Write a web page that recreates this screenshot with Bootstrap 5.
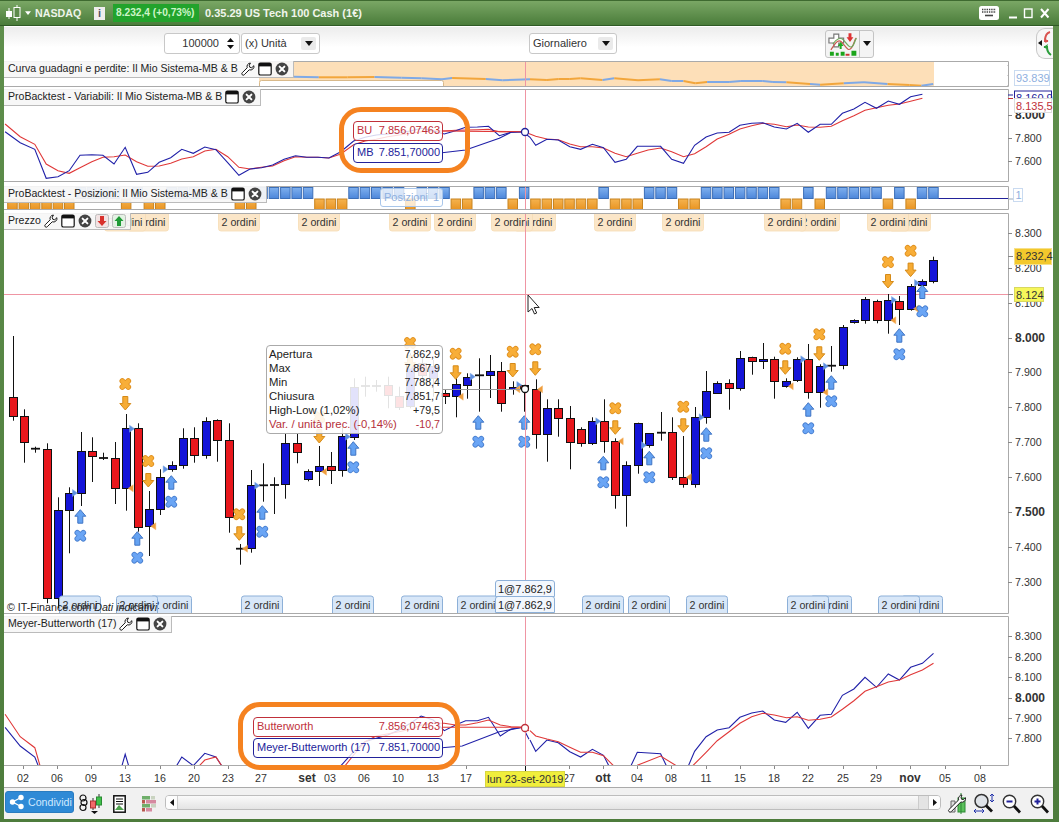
<!DOCTYPE html>
<html lang="it">
<head>
<meta charset="utf-8">
<title>NASDAQ</title>
<link href="https://cdn.jsdelivr.net/npm/bootstrap@5.3.0/dist/css/bootstrap.min.css" rel="stylesheet">
<style>
html,body{margin:0;padding:0;background:#fff;overflow:hidden}
body,svg text{font-family:"Liberation Sans",Arial,sans-serif;font-size:10.67px;color:#222}
svg text.t11{font-size:11px}
svg text.tb{font-size:12px;font-weight:700}
.win{position:relative;width:1059px;height:822px;padding:0 6px 3px 4px;background:linear-gradient(#5f8f4c,#4d7c3c);overflow:hidden;border-top:1px solid #3e6a30}
.ttl{height:25px;flex:none;margin:0 -6px 0 -4px;padding-left:5px;color:#fff;font-weight:700;font-size:10.67px;background:linear-gradient(#7aa765,#4a7c3a);border-bottom:1px solid #2f5a25}
.cols{background:#fff;flex:1 1 auto;padding-top:1px}
.ttl svg{flex:none}
.arr{margin-left:4px}
.nm{margin-left:4px;color:#eef4ea;width:46px}
.inf{width:11px;height:13px;margin-left:13px;background:#eee;color:#556;text-align:center;line-height:13px;font-size:11px}
.quo{margin-left:8px;width:86px;height:18px;line-height:18px;padding-left:3px;background:#22a32c;color:#cdf5c8;white-space:nowrap;overflow:hidden;font-size:10.2px}
.clk{margin-left:6px;color:#f0f5ec;font-size:11px}
.wbtns{margin-left:auto;padding-right:7px}
.tools{height:34px;flex:none;background:linear-gradient(#ececec,#fff 60%);padding-bottom:1px}
.fld{height:21px;background:#fff;border:1px solid #c8c8c8;border-radius:3px;font-size:11px;color:#333}
.fnum{width:76px;margin-left:160px;padding-right:5px}
.fsel{width:79px;margin-left:1px;padding:0 3px}
.fsel2{width:88px;margin-left:209px;padding:0 3px}
.dbox{width:15px;height:13px;background:#eaeaea;border-radius:2px}
.sbtn{width:49px;height:28px;margin-left:208px;background:#f4f4f4;border:1px solid #c4c4c4;border-radius:3px}
.sdrop{width:14px;height:100%;border-left:1px solid #c4c4c4}
.ovl{width:17px;height:31px;margin-left:auto;background:#f7f7f7;border:1px solid #c8c8c8;border-right:0;border-radius:9px 0 0 9px}
.pane{position:relative;background:#fff;flex:none}
.pane svg{display:block}
.p1{height:26px}.p2{height:93px;margin-top:2px}.p3{height:24px;margin-top:4px}.p4{height:401px;margin-top:3px}.p5{height:150px;margin-top:2px}.p6{height:22px}
.head{position:absolute;left:0;height:17px;padding:0 4px 0 4px;background:rgba(246,246,246,.94);border-right:1px solid #bbb;border-bottom:1px solid #bbb;font-size:10.55px;color:#222;white-space:nowrap;gap:3px}
.bbar{height:31px;flex:none;background:#f1f1f1}
.cond{width:69px;height:22px;margin:0 0 3px 1px;padding:0 0 0 3px;font-size:10.67px;background:#2f8ad6;border-color:#2a7cc0;color:#cfe9ff;border-radius:3px;gap:3px;--bs-btn-padding-y:0}
.ic1{margin-left:5px}.ic2{margin-left:11px}.ic3{margin-left:16px}
.scr{width:776px;height:15px;margin:0 0 2px 8px;background:linear-gradient(#fafafa,#e4e4e4);border:1px solid #bdbdbd;border-radius:4px}
.scb{width:12px;height:100%;background:#fdfdfd;border-right:1px solid #ccc;border-radius:3px 0 0 3px}
.scg{width:10px;height:100%;background:#e4e4e4;border-left:1px solid #ccc;margin-left:auto}
.scb2{border-right:0;border-left:1px solid #ccc;border-radius:0 3px 3px 0}
.ic4{margin-left:6px}.ic5{margin-left:7px}.ic6{margin-left:7px}.ic7{margin-left:9px}
.tipb{position:absolute;left:266px;top:344px;width:177px;height:89px;padding:1px 2px 0 2px;background:rgba(255,255,255,.88);border:1px solid #aaa;border-radius:4px;line-height:14px;color:#222;z-index:5}
.tipb .neg{color:#b5303a}
.tipb span:first-child{font-size:11.3px}
.hov{position:absolute;height:20px;padding:0 2px 0 3px;background:rgba(255,255,255,.82);border-radius:4px;font-size:11px;z-index:5}
.hr{border:1px solid #c0303a;color:#c0303a}.hb{border:1px solid #22229a;color:#22229a}
.h1{left:353px;top:120px;width:90px}.h2{left:353px;top:142px;width:90px}
.h3{left:253px;top:716px;width:190px}.h4{left:253px;top:737px;width:190px}
.ring{position:absolute;border:5px solid #f58220;z-index:6;background:transparent}
.r1{left:339px;top:106px;width:131px;height:66px;border-radius:22px}
.r2{left:238px;top:701px;width:222px;height:68px;border-radius:22px}
.pos{position:absolute;left:380px;top:187px;width:63px;height:19px;padding:0 3px;background:rgba(255,255,255,.75);border:1px solid #a9c6ea;border-radius:3px;color:#8fb0e0;font-size:11px;z-index:5}
.fil{position:absolute;left:495px;width:60px;height:17px;line-height:16px;text-align:center;background:#f2f7fd;border:1px solid #8db0d8;border-radius:3px 3px 0 0;font-size:11px;color:#222;z-index:4}
.f1{top:579px}.f2{top:595px}
</style>
</head>
<body>
<svg width="0" height="0" class="position-absolute">
<defs>
<symbol id="wr" viewBox="0 0 16 16"><path d="M10.8 1.2a4 4 0 0 0-3.7 5.4L1.4 12.3a1.6 1.6 0 0 0 2.3 2.3l5.700-5.700a4 4 0 0 0 5.300-4.700l-2.400 2.400-2.300-.6-.6-2.300z" fill="#fff" stroke="#111" stroke-width="1.100"/></symbol>
<symbol id="wn" viewBox="0 0 14 14"><rect x=".8" y="1" width="12.400" height="12" rx="1.600" fill="#fff" stroke="#111" stroke-width="1.200"/><rect x="1" y="1" width="12" height="3.400" fill="#111"/></symbol>
<symbol id="cl" viewBox="0 0 14 14"><circle cx="7" cy="7" r="6.400" fill="#444"/><path d="M4.600 4.600l4.800 4.800M9.400 4.600L4.600 9.400" stroke="#fff" stroke-width="2" stroke-linecap="round"/></symbol>
</defs>
</svg>
<div class="win d-flex flex-column">
  <div class="ttl d-flex align-items-center">
    <svg width="16" height="16" viewBox="0 0 16 16"><path d="M4 3v11" stroke="#fff"/><rect x="1" y="6" width="6" height="6" fill="#fff"/><path d="M12 0v16" stroke="#fff"/><rect x="9" y="2.500" width="6" height="10" fill="#5d8b4a" stroke="#fff"/></svg>
    <svg class="arr" width="6" height="4" viewBox="0 0 8 5"><path d="M0 0h8L4 5z" fill="#fff"/></svg>
    <span class="nm">NASDAQ</span>
    <span class="inf">i</span>
    <span class="quo">8.232,4 (+0,73%)</span>
    <span class="clk">0.35.29 US Tech 100 Cash (1€)</span>
    <div class="wbtns d-flex align-items-center gap-2">
      <svg width="21" height="14" viewBox="0 0 21 14"><rect width="20" height="14" rx="2.500" fill="#fff"/><path d="M3 3.500h14M3 6h14" stroke="#444" stroke-width="1.400" stroke-dasharray="1.400 .9"/><path d="M6 9.500h8" stroke="#444" stroke-width="1.600"/></svg>
      <svg width="44" height="12" viewBox="0 0 44 12"><path d="M1 10.500h8" stroke="#fff" stroke-width="2"/><rect x="16.500" y="2" width="7.500" height="8.500" fill="none" stroke="#fff" stroke-width="1.400"/><path d="M33 2l7.500 8.500M40.500 2L33 10.500" stroke="#fff" stroke-width="2"/></svg>
    </div>
  </div>
  <div class="cols d-flex flex-column">
  <div class="tools d-flex align-items-center">
    <div class="fld fnum d-flex align-items-center justify-content-end">100000
      <svg class="ms-2" width="7" height="13" viewBox="0 0 7 13"><path d="M0 5l3.500-4L7 5zM0 8l3.500 4L7 8z" fill="#111"/></svg></div>
    <div class="fld fsel d-flex align-items-center justify-content-between">(x) Unità
      <span class="dbox d-flex align-items-center justify-content-center"><svg width="8" height="5" viewBox="0 0 8 5"><path d="M0 0h8L4 5z" fill="#111"/></svg></span></div>
    <div class="fld fsel2 d-flex align-items-center justify-content-between">Giornaliero
      <span class="dbox d-flex align-items-center justify-content-center"><svg width="8" height="5" viewBox="0 0 8 5"><path d="M0 0h8L4 5z" fill="#111"/></svg></span></div>
    <div class="sbtn d-flex align-items-center">
      <svg width="34" height="26" viewBox="0 0 34 26"><path d="M8 3h5v4h5v5h-5v4H8v-4H3V7h5z" fill="#fff" stroke="#777" stroke-width="1.200"/><path d="M5 19c5-8 8-12 12-7s6 9 9 5 3-9 5-10" fill="none" stroke="#c9584e" stroke-width="1.200"/><path d="M7 13c4-6 8-7 11-4s5 8 8 7 3-6 5-9" fill="none" stroke="#6ea85a" stroke-width="1.200"/><path d="M23 2h3v4h2l-3.500 5L21 6h2z" fill="#d33"/><path d="M14 18h2v-3h2l-3-4-3 4h2z" fill="#2a2"/><path d="M4 21h4v4H4zM10 22h3v3h-3zM15 21h4v4h-4zM26 20h5v5h-5z" fill="#1ca51c"/><path d="M20 23h4v2h-4z" fill="#c33"/></svg>
      <span class="sdrop d-flex align-items-center justify-content-center"><svg width="8" height="5" viewBox="0 0 8 5"><path d="M0 0h8L4 5z" fill="#111"/></svg></span>
    </div>
    <div class="ovl d-flex align-items-center">
      <svg width="16" height="27" viewBox="0 0 16 27"><path d="M5 10v6L1 13z" fill="#111"/><path d="M13 2c-4 1-5 4-5 9h3" fill="none" stroke="#d9534f" stroke-width="2"/><path d="M7 8l1.500 5 3-2z" fill="#d9534f"/><path d="M14 25c-3-2-4-4-4-8H7" fill="none" stroke="#2a9d3a" stroke-width="2"/><path d="M11 14l-1.500 5-3-2z" fill="#2a9d3a"/></svg>
    </div>
  </div>

  <div class="pane p1"><svg id="s1" width="1049" height="26" viewBox="4 61 1049 26"></svg>
    <div class="head d-flex align-items-center top-0">Curva guadagni e perdite: Il Mio Sistema-MB &amp; B
      <svg width="14" height="14"><use href="#wr"/></svg><svg width="14" height="14"><use href="#wn"/></svg><svg width="14" height="14"><use href="#cl"/></svg></div></div>
  <div class="pane p2"><svg id="s2" width="1049" height="93" viewBox="4 89 1049 93"></svg>
    <div class="head d-flex align-items-center top-0">ProBacktest - Variabili: Il Mio Sistema-MB &amp; B
      <svg width="14" height="14"><use href="#wn"/></svg><svg width="14" height="14"><use href="#cl"/></svg></div></div>
  <div class="pane p3"><svg id="s3" width="1049" height="24" viewBox="4 186 1049 24"></svg>
    <div class="head d-flex align-items-center top-0">ProBacktest - Posizioni: Il Mio Sistema-MB &amp; B
      <svg width="14" height="14"><use href="#wn"/></svg><svg width="14" height="14"><use href="#cl"/></svg></div></div>
  <div class="pane p4"><svg id="s4" width="1049" height="401" viewBox="4 213 1049 401"></svg>
    <div class="head d-flex align-items-center top-0">Prezzo
      <svg width="14" height="14"><use href="#wr"/></svg><svg width="14" height="14"><use href="#wn"/></svg><svg width="14" height="14"><use href="#cl"/></svg>
      <svg width="14" height="14" viewBox="0 0 14 14"><rect x=".5" y=".5" width="13" height="13" rx="2" fill="#f2e3e3" stroke="#bbb"/><path d="M5 2h4v5h2.500L7 12 2.500 7H5z" fill="#d8312c"/></svg>
      <svg width="14" height="14" viewBox="0 0 14 14"><rect x=".5" y=".5" width="13" height="13" rx="2" fill="#e3f2e3" stroke="#bbb"/><path d="M5 12h4V7h2.500L7 2 2.500 7H5z" fill="#1f9a35"/></svg></div></div>
  <div class="pane p5"><svg id="s5" width="1049" height="150" viewBox="4 616 1049 150"></svg>
    <div class="head d-flex align-items-center top-0">Meyer-Butterworth (17)
      <svg width="14" height="14"><use href="#wr"/></svg><svg width="14" height="14"><use href="#wn"/></svg><svg width="14" height="14"><use href="#cl"/></svg></div></div>
  <div class="pane p6"><svg id="s6" width="1049" height="22" viewBox="4 766 1049 22"></svg></div>

  <div class="bbar d-flex align-items-center">
    <button type="button" class="btn btn-primary cond d-flex align-items-center">
      <svg width="16" height="16" viewBox="0 0 16 16"><path d="M3.500 8L12 3.500M3.500 8l8.500 4.500" stroke="#fff" stroke-width="1.300"/><circle cx="3.500" cy="8" r="2.700" fill="#fff"/><circle cx="12" cy="3.500" r="2.700" fill="#fff"/><circle cx="12" cy="12.500" r="2.700" fill="#fff"/></svg>Condividi</button>
    <svg class="ic1" width="23" height="20" viewBox="0 0 23 20"><g fill="none" stroke="#111" stroke-width="1.200"><rect x="1" y="1" width="6" height="6" rx="3"/><rect x="2" y="5.500" width="6" height="6" rx="3"/><rect x="1" y="10.500" width="6" height="6" rx="3"/></g><path d="M14 4v12" stroke="#333"/><rect x="11.500" y="7" width="5" height="7" fill="#f26a6a" stroke="#a33"/><path d="M20 0v14" stroke="#333"/><rect x="17.500" y="3" width="5" height="8" fill="#3fc04a" stroke="#2a8a33"/><path d="M12 17h7l-3.500 3z" fill="#111"/></svg>
    <svg class="ic2" width="13" height="18" viewBox="0 0 13 18"><rect x=".8" y=".8" width="11.400" height="16.400" fill="#fff" stroke="#111" stroke-width="1.500"/><path d="M3 4h7M3 6.500h7M3 9h7" stroke="#111"/><path d="M2 15l4-5 5 5z" fill="#4ea24e"/></svg>
    <svg class="ic3" width="15" height="18" viewBox="0 0 15 18"><path d="M0 1h8v3.500H0zM0 9h8v3.500H0z" fill="#6fae6a"/><path d="M4 5h10v3.500H4zM4 13h6v3.500H4z" fill="#d58aa0"/><path d="M9 1h4v3.500H9zM9 9h5v3.500H9z" fill="#c9d3c0"/><path d="M0 5h3v3.500H0zM0 13h3v3.500H0z" fill="#b7584d"/></svg>
    <div class="scr d-flex">
      <span class="scb d-flex align-items-center justify-content-center"><svg width="4" height="7" viewBox="0 0 4 7"><path d="M4 0v7L0 3.500z" fill="#111"/></svg></span>
      <span class="scg"></span>
      <span class="scb scb2 d-flex align-items-center justify-content-center"><svg width="4" height="7" viewBox="0 0 4 7"><path d="M0 0v7l4-3.500z" fill="#111"/></svg></span>
    </div>
    <svg class="ic4" width="19" height="21" viewBox="0 0 19 21"><path d="M4 8h4v11H4z" fill="#ddd" stroke="#666"/><rect x="11" y="5" width="7" height="14" fill="#5cc05c" stroke="#2a8a33"/><path d="M14 0v21" stroke="#2a8a33"/><path d="M15 2a3.600 3.600 0 0 0-3.300 4.900L2 16.500a1.500 1.500 0 0 0 2.200 2.200L13.800 9a3.600 3.600 0 0 0 4.700-4.300l-2 2-2-.5-.5-2z" fill="#fff" stroke="#222"/></svg>
    <svg class="ic5" width="22" height="21" viewBox="0 0 22 21"><circle cx="8.500" cy="8" r="6.500" fill="#dfe3e8" stroke="#333" stroke-width="1.500"/><path d="M13 12.500l6 6" stroke="#111" stroke-width="2.800"/><path d="M19 1v8M19 1l-2 2M19 1l2 2M19 9l-2-2M19 9l2-2M1 18h10M1 18l2-2M1 18l2 2M11 18l-2-2M11 18l-2 2" fill="none" stroke="#2233aa"/></svg>
    <svg class="ic6" width="19" height="20" viewBox="0 0 19 20"><circle cx="7.500" cy="7.500" r="6.200" fill="#fff" stroke="#333" stroke-width="1.400"/><path d="M4.500 7.500h6" stroke="#22229a" stroke-width="2"/><path d="M12 12l6 6.500" stroke="#111" stroke-width="2.800"/></svg>
    <svg class="ic7" width="19" height="20" viewBox="0 0 19 20"><circle cx="7.500" cy="7.500" r="6.200" fill="#fff" stroke="#333" stroke-width="1.400"/><path d="M4.500 7.500h6M7.500 4.500v6" stroke="#22229a" stroke-width="2"/><path d="M12 12l6 6.500" stroke="#111" stroke-width="2.800"/></svg>
  </div>
  </div>

  <div class="tipb">
    <div class="d-flex justify-content-between"><span>Apertura</span><span>7.862,9</span></div>
    <div class="d-flex justify-content-between"><span>Max</span><span>7.867,9</span></div>
    <div class="d-flex justify-content-between"><span>Min</span><span>7.788,4</span></div>
    <div class="d-flex justify-content-between"><span>Chiusura</span><span>7.851,7</span></div>
    <div class="d-flex justify-content-between"><span>High-Low (1,02%)</span><span>+79,5</span></div>
    <div class="d-flex justify-content-between neg"><span>Var. / unità prec. (-0,14%)</span><span>-10,7</span></div>
  </div>
  <div class="hov hr h1 d-flex align-items-center justify-content-between"><span>BU</span><span>7.856,07463</span></div>
  <div class="hov hb h2 d-flex align-items-center justify-content-between"><span>MB</span><span>7.851,70000</span></div>
  <div class="hov hr h3 d-flex align-items-center justify-content-between"><span>Butterworth</span><span>7.856,07463</span></div>
  <div class="hov hb h4 d-flex align-items-center justify-content-between"><span>Meyer-Butterworth (17)</span><span>7.851,70000</span></div>
  <div class="ring r1"></div>
  <div class="ring r2"></div>
  <div class="pos d-flex align-items-center justify-content-between"><span>Posizioni</span><span>1</span></div>
  <div class="fil f1">1@7.862,9</div>
  <div class="fil f2">1@7.862,9</div>
</div>

<script>
var cx=function(i){return 12.5+11.37*i};
var BL='#2020a8',RD='#e03838',CH='#ef95a3',BRD='#aaaaaa';
function PL(pts,c,w){return '<polyline fill="none" stroke="'+c+'" stroke-width="'+(w||1.1)+'" points="'+pts.map(function(p){return p[0].toFixed(1)+','+p[1].toFixed(1)}).join(' ')+'"/>'}
function Z(a,ox,oy){return a.map(function(p){return [ox+p[0]/2.964,oy+p[1]/3]})}
function frame(t,b){return '<path d="M4 '+(t+.5)+'H1008.5V'+(b-.5)+'H4" fill="none" stroke="'+BRD+'"/>'}
function tick(y,l,bold){return '<path d="M1008 '+(Math.round(y)+.5)+'h4" stroke="#888"/><text x="1015" y="'+(y+4)+'"'+(bold?' class="tb"':'')+' fill="#333">'+l+'</text>'}
function VX(t,b){return '<path d="M525.5 '+t+'V'+b+'" stroke="'+CH+'"/>'}
function CIRC(y,c){return '<circle cx="525" cy="'+y+'" r="3.500" fill="#fff" stroke="'+c+'" stroke-width="1.300"/>'}

var pos=[0,0,0,0,0,0,1,1,1,1,0,1,0,0,1,1,1,1,1,1,0,0,1,1,1,1,1,0,0,0,1,1,1,1,1,0,1,1,1,0,0,1,1,1,0,1,0,0,0,0,0,0,1,0,0,0,1,1,1,0,0,1,1,1,1,1,1,1,0,0,1,0,1,1,1,1,1,0,1,0,1,1];

(function(){
 var a=Z([[870,230],[945,232],[1030,232],[1110,231],[1190,233],[1250,235],[1310,238],[1340,234],[1440,237],[1490,241]],0,0)
  .concat(Z([[0,238],[50,240],[85,237],[118,237],[150,235],[215,240],[250,235],[320,241],[385,238],[420,243],[455,243],[490,250],[525,246],[590,246],[625,243],[690,243],[720,246],[760,247],[830,252],[860,254],[930,250],[990,247],[1060,252],[1125,255],[1160,257],[1195,252]],530,0));
 var s='<rect x="259" y="61" width="675" height="26" fill="#fddfb8"/><rect x="259.500" y="80.500" width="184" height="8" rx="2" fill="#fff" stroke="#d8b98a"/>';
 for(var i=0;i<a.length-1;i++){var k=Math.round((a[i][0]-12.5)/11.37);s+=PL([a[i],a[i+1]],pos[k]?'#7fa9e6':'#f2a63c',2)}
 s+=VX(61,87)+frame(61,87)+'<path d="M1008 65v22" stroke="#aaa" stroke-dasharray="1 9"/>';
 s+='<rect x="1014.500" y="70.500" width="35" height="15" fill="#fff" stroke="#c9daf0"/><text x="1016" y="82" class="t11" fill="#8fb0e0">93.839</text>';
 document.getElementById('s1').innerHTML=s;
})();

(function(){
 var b=Z([[15,395],[60,428],[103,448],[137,535],[172,530],[205,512],[237,466],[272,464],[305,466],[338,492],[371,442],[405,523],[438,517],[472,487],[506,473],[539,448],[573,460],[607,441],[640,449],[675,488],[708,526],[741,507],[775,503],[808,495],[842,478],[876,467],[909,472],[942,472],[975,474],[1010,455],[1048,423],[1082,412],[1115,405],[1149,402],[1183,398],[1216,393],[1250,385],[1284,393],[1317,402],[1350,392],[1380,382],[1415,381],[1448,379],[1480,407],[1515,397],[1550,395]],0,0)
 .concat(Z([[0,412],[17,436],[50,418],[84,420],[118,440],[150,448],[185,433],[218,443],[252,487],[285,478],[318,439],[387,439],[420,478],[455,490],[488,436],[522,411],[555,399],[590,397],[622,376],[657,370],[690,368],[724,381],[760,387],[792,370],[825,397],[860,373],[893,373],[926,340],[960,327],[993,307],[1027,325],[1062,303],[1095,313],[1128,290],[1163,283]],530,0));
 var r=Z([[15,372],[60,410],[103,433],[137,492],[172,512],[205,520],[237,503],[272,485],[305,472],[338,470],[371,465],[405,485],[438,499],[472,498],[506,490],[539,477],[573,470],[607,453],[640,448],[675,470],[708,502],[741,507],[775,502],[808,498],[842,482],[876,470],[909,472],[942,472],[975,474],[1010,462],[1048,434],[1082,423],[1115,418],[1149,410],[1183,405],[1216,400],[1250,395],[1284,392],[1317,393],[1350,391],[1380,390],[1415,389],[1448,388],[1480,395],[1515,395],[1550,395]],0,0)
 .concat(Z([[0,402],[17,409],[50,417],[84,419],[118,432],[150,440],[185,440],[218,444],[252,460],[285,470],[318,460],[350,450],[387,444],[420,455],[455,470],[488,461],[522,440],[555,417],[590,403],[622,387],[657,377],[690,370],[724,373],[760,380],[792,375],[825,381],[860,382],[893,379],[926,362],[960,347],[993,331],[1027,323],[1062,316],[1095,312],[1128,304],[1163,295]],530,0));
 var s=PL(r,RD)+PL(b,BL)+PL(Z([[1310,458],[1380,450],[1480,415],[1515,397],[1550,395]],0,0),BL)+PL(Z([[1310,393],[1550,395]],0,0),RD);
 s+=VX(89,182)+frame(89,182)+CIRC(132,'#22229a');
 s+='<path d="M1008 95h5" stroke="#22229a"/><path d="M1008 98.500h5" stroke="#c0303a"/><rect x="1014.500" y="91" width="37" height="14" fill="#fff" stroke="#22229a"/><text x="1016" y="102" class="t11" fill="#22229a">8.160,9</text>';
 s+=tick(114.500,'8.000',true)+tick(138,'7.800')+tick(161,'7.600');
 s+='<rect x="1014.500" y="98.500" width="37" height="14" fill="#fff" stroke="#ddd"/><text x="1016" y="109.500" class="t11" fill="#c0303a">8.135,5</text>';
 document.getElementById('s2').innerHTML=s;
})();

(function(){
 var s='<defs><linearGradient id="gb" x1="0" y1="0" x2="0" y2="1"><stop offset="0" stop-color="#7fb0ee"/><stop offset="1" stop-color="#4c86da"/></linearGradient><linearGradient id="go" x1="0" y1="0" x2="0" y2="1"><stop offset="0" stop-color="#f5b34f"/><stop offset="1" stop-color="#e99422"/></linearGradient></defs>';
 s+='<path d="M938 198.500H1008" stroke="#22229a"/>';
 pos.forEach(function(p,i){var x=cx(i)-4.800;s+=p?'<rect x="'+x.toFixed(1)+'" y="187.500" width="9.500" height="11" fill="url(#gb)" stroke="#3c6fb8"/>':'<rect x="'+x.toFixed(1)+'" y="199" width="9.500" height="10.500" fill="url(#go)" stroke="#c88420"/>'});
 s+=VX(186,210)+frame(186,210);
 s+='<path d="M1008 199h5" stroke="#9ab"/><rect x="1013.500" y="188.500" width="9" height="13" fill="#fff" stroke="#c9daf0"/><text x="1015.500" y="199" class="t11" fill="#8fb0e0">1</text>';
 document.getElementById('s3').innerHTML=s;
})();

(function(){
 var A=function(base,rows){return rows.map(function(r){return [base+r[0]/3,base+r[1]/3,base+r[2]/3,base+r[3]/3,r[4]]})};
 var bars=A(230,[[502,560,318,572,'r'],[559,637,538,698,'r'],[656,656,650,668,'d'],[658,1105,640,1120,'r'],[841,1105,802,1135,'b'],[790,842,772,970,'b'],[664,790,606,828,'b'],[664,680,622,756,'r'],[684,684,668,690,'d'],[685,776,636,822,'r'],[595,775,552,842,'b'],[595,892,580,905,'r'],[838,889,783,978,'b'],[742,838,718,855,'b'],[706,718,694,725,'b'],[625,706,595,716,'b'],[625,676,592,698,'r'],[574,676,562,686,'b'],[571,631,568,695,'r'],[631,862,580,908,'r'],[956,956,942,1004,'d'],[766,955,720,968,'b'],[766,766,700,815,'d'],[765,765,742,852,'d'],[640,764,612,806,'b'],[640,668,612,700,'r'],[724,748,718,754,'b'],[709,724,648,768,'b'],[709,721,666,762,'r'],[619,721,590,740,'b']])
 .concat(A(330,[[170,320,145,330,'b'],[168,168,140,200,'d'],[168,168,150,185,'d'],[165,195,140,235,'r'],[197,230,170,240,'r'],[100,230,70,235,'b'],[100,135,80,160,'r'],[108,145,90,200,'b'],[190,200,180,222,'r'],[162,198,140,262,'b'],[140,164,130,206,'b'],[136,136,85,245,'d'],[124,136,75,204,'b'],[124,220,96,245,'r'],[170,176,154,194,'b'],[166,178,165,245,'r'],[178,313,148,356,'r'],[235,313,208,395,'b'],[235,265,208,320,'r'],[265,337,228,418,'r'],[298,340,292,350,'r'],[274,340,262,345,'b'],[274,334,208,368,'r']]))
 .concat(A(300,[[424,586,415,626,'r'],[496,586,484,680,'b'],[370,496,368,521,'b'],[400,436,400,443,'b'],[398,398,336,422,'d'],[397,532,352,540,'r'],[532,553,408,563,'r'],[352,553,321,563,'b'],[274,352,213,371,'b'],[250,280,244,281,'b'],[250,265,238,329,'r'],[175,265,153,272,'b'],[172,185,170,224,'r'],[178,184,129,207,'b'],[178,244,170,296,'r'],[244,259,235,263,'b'],[178,242,172,246,'b'],[178,277,132,296,'r'],[199,277,193,323,'b'],[197,197,138,215,'d'],[82,196,75,208,'b'],[61,67,58,71,'b'],[-3,61,-9,71,'b'],[4,61,-1,70,'r'],[0,61,-18,101,'b'],[3,26,-12,75,'r'],[-42,26,-48,32,'b'],[-58,-46,-62,-40,'b'],[-120,-57,-130,-50,'b']]));
 var s='<path d="M4 294.500H1008.500" stroke="'+CH+'"/>';
 var f={r:'#e8171c',b:'#1414d8'};
 bars.forEach(function(b,i){var x=Math.round(cx(i));
  s+='<path d="M'+(x+.5)+' '+b[2].toFixed(1)+'V'+b[3].toFixed(1)+'" stroke="#111"/>';
  if(b[4]=='d'){s+='<path d="M'+(x-4)+' '+(b[0]).toFixed(1)+'h9" stroke="#111" stroke-width="1.800"/>'}
  else{s+='<rect x="'+(x-3.5)+'" y="'+(Math.round(b[0])+.5)+'" width="8" height="'+Math.max(2,Math.round(b[1]-b[0]))+'" fill="'+f[b[4]]+'" stroke="#111"/>'}
 });
 [[75,493],[132,428.700],[165.700,469.300],[257.300,485.700],[348,436.700],[472.700,376.700],[519.300,385],[598.300,421.300],[644,445.300],[701.700,417.300],[803.300,359.300],[826,366.300],[894,300],[917,283]].forEach(function(p){s+='<path d="M'+(p[0]-2.500)+' '+(p[1]-3.500)+'l5 3.500-5 3.500z" fill="#5d8fe0" stroke="#7fa9e6" stroke-width=".5"/>'});
 [[130.700,488.300],[153.300,526.300],[245,548.700],[324,471.700],[460.700,396.700],[517.300,389.300],[540,389.300],[620.700,441.300],[688.700,477.300],[790.700,386.300],[825.300,392.300],[893.300,320.300],[916,308.700]].forEach(function(p){s+='<path d="M'+(p[0]+2.500)+' '+(p[1]-3.500)+'l-5 3.500 5 3.500z" fill="#ef9d3c" stroke="#f2b46a" stroke-width=".5"/>'});
 function X(x,y,c,d){var q='M'+(x-3)+' '+(y-3)+'l6 6m0-6l-6 6';return '<path d="'+q+'" stroke="'+d+'" stroke-width="5.600" stroke-linecap="round"/><path d="'+q+'" stroke="'+c+'" stroke-width="3.900" stroke-linecap="round"/>'}
 function U(x,y){return '<path d="M'+x+' '+(y-7)+'l5.500 6.500h-3v7h-5v-7h-3z" fill="#64a2f2" stroke="#3f74c4"/>'}
 function D(x,y){return '<path d="M'+x+' '+(y+7)+'l5.500-6.500h-3v-7h-5v7h-3z" fill="#f6ab33" stroke="#d58a18"/>'}
 [[80.300,516.700,535.700],[137.300,538.700,557.700],[171.300,482.700,501.700],[262.300,512.700,531.700],[353.300,448.700,467.300],[478.300,422.700,441.700],[524.300,422.700,441.700],[603.300,463.300,482.300],[649.300,458.300,477.300],[706.300,434.700,453.300],[808.300,409.700,428.300],[831.300,382.700,401.300],[899.300,335.700,354.300],[922.300,292,311.300]].forEach(function(m){s+=U(m[0],m[1])+X(m[0],m[2],'#6aa5f5','#4a80d0')});
 [[125.300,384,403],[148.300,461,480],[239.300,514.300,533.300],[319.300,417,436],[410,343,362],[455.700,353.700,372.300],[512.700,351.700,370],[535.300,349.300,368.300],[615.300,408.300,427.300],[683.300,406.700,425.300],[785.300,348.700,367.300],[819.300,334.300,353.300],[888,262,281],[910.600,250.700,269.600]].forEach(function(m){s+=X(m[0],m[1],'#f8ae38','#e0901f')+D(m[0],m[2])});
 var top=[125,148,239,319,410,455,512,535,615,683,785,819,888,910],bot=[80,137,171,262,353,422,478,603,649,707,808,831,899,922];
 top.slice().reverse().forEach(function(c){s+='<path d="M'+(c-20.500)+' 213.500h41v15a2.500 2.500 0 0 1-2.500 2.500h-36a2.500 2.500 0 0 1-2.500-2.500z" fill="#fbe6c8" stroke="#f6dcb4" stroke-width=".8"/><text x="'+(c-17.500)+'" y="226" fill="#333">2 ordini</text>'});
 bot.slice().reverse().forEach(function(c){s+='<path d="M'+(c-20.500)+' 613.500v-15a2.500 2.500 0 0 1 2.500-2.500h36a2.500 2.500 0 0 1 2.500 2.500v15z" fill="#d8e7f8" stroke="#8db0d8"/><text x="'+(c-17.500)+'" y="609" fill="#333">2 ordini</text>'});
 s+='<text x="7" y="611" fill="#222">© IT-Finance.com <tspan font-style="italic">Dati indicativi</tspan></text>';
 s+=VX(213,614)+'<path d="M443 389.500H525" stroke="#999"/>'+CIRC(389,'#111');
 s+='<path d="M528 295v17l4-3.500 2.500 5.500 2.200-1-2.500-5.500h5z" fill="#fff" stroke="#222"/>';
 s+=frame(213,614);
 [[233,'8.300'],[268,'8.200'],[303,'8.100'],[338,'8.000',1],[372,'7.900'],[407,'7.800'],[442,'7.700'],[477,'7.600'],[512,'7.500',1],[547,'7.400'],[582,'7.300']].forEach(function(t){s+=tick(t[0],t[1],t[2])});
 s+='<path d="M1008 256.500h5" stroke="#888"/><rect x="1014.500" y="248.500" width="37" height="16" fill="#f3c82c" stroke="#f6e08a"/><text x="1016" y="260" class="t11" fill="#333">8.232,4</text>';
 s+='<path d="M1008 294.500h5" stroke="#888"/><rect x="1014.500" y="287.500" width="29" height="14" fill="#f6f65a" stroke="#d8d860"/><text x="1016" y="298.500" class="t11" fill="#333">8.124</text>';
 document.getElementById('s4').innerHTML=s;
})();

(function(){
 var o=610;
 var s='';
 [[[15,352],[60,408],[103,441],[122,490]],[[355,490],[371,433],[388,490]],[[510,490],[539,441],[573,467],[607,430],[640,441],[672,490]],[[990,490],[1048,425],[1082,395],[1115,385],[1149,375],[1183,360],[1216,340],[1248,318],[1284,330],[1317,362],[1350,345],[1380,332],[1415,332],[1448,322],[1483,378],[1515,357],[1550,352],[1568,388]],[[1310,413],[1370,408],[1480,365],[1550,352]]].forEach(function(a){s+=PL(Z(a,0,o),BL)});
 [[[15,313],[60,380],[103,413],[125,490]],[[570,490],[607,450],[640,441],[672,490]],[[1005,490],[1048,435],[1082,395],[1115,378],[1183,365],[1216,358],[1250,345],[1284,340],[1317,340],[1350,345],[1380,345],[1415,338],[1448,330],[1483,345],[1515,350],[1550,352],[1568,362]],[[1310,352],[1550,352]]].forEach(function(a){s+=PL(Z(a,0,o),RD)});
 s+=PL(Z([[0,390],[17,424],[50,390],[84,398],[118,425],[150,441],[185,418],[218,436],[245,490]],530,o),BL);
 s+=PL(Z([[285,490],[298,470],[318,427],[387,431],[415,490]],530,o),BL);
 s+=PL(Z([[460,490],[488,424],[522,380],[555,360],[590,353],[622,322],[657,309],[690,303],[724,330],[758,337],[792,307],[825,355],[860,316],[893,313],[926,256],[960,237],[993,202],[1027,232],[1062,192],[1095,210],[1128,172],[1163,160],[1196,130]],530,o),BL);
 s+=PL(Z([[0,362],[17,378],[50,387],[84,395],[118,412],[150,427],[185,427],[218,437],[270,490]],530,o),RD);
 s+=PL(Z([[285,490],[318,466],[387,438],[470,490]],530,o),RD);
 s+=PL(Z([[460,490],[522,427],[555,392],[590,365],[622,340],[657,320],[690,310],[724,315],[760,323],[792,320],[825,331],[860,328],[893,321],[926,298],[960,272],[993,244],[1027,230],[1062,216],[1095,210],[1128,194],[1163,180],[1196,160]],530,o),RD);
 s+=VX(616,766)+CIRC(728,'#c0303a')+frame(616,766);
 [[636,'8.300'],[657,'8.200'],[677,'8.100'],[697.500,'8.000',1],[718,'7.900'],[738,'7.800']].forEach(function(t){s+=tick(t[0],t[1],t[2])});
 document.getElementById('s5').innerHTML=s;
})();

(function(){
 var s='';
 [[23,'02'],[57,'06'],[91,'09'],[125,'13'],[160,'16'],[194,'20'],[228,'23'],[261,'27'],[307,'set',1],[330,'03'],[364,'06'],[398,'10'],[433,'13'],[466,'17'],[569,'27'],[603,'ott',1],[637,'04'],[671,'08'],[706,'11'],[740,'15'],[774,'18'],[808,'22'],[843,'25'],[876,'29'],[910,'nov',1],[945,'05'],[980,'08']].forEach(function(d){
  s+='<path d="M'+(d[0]+.5)+' 766v3" stroke="#888"/><text x="'+d[0]+'" y="782" text-anchor="middle" fill="#333"'+(d[2]?' class="tb"':'')+'>'+d[1]+'</text>'});
 s+='<path d="M525.500 766v5" stroke="#111"/><rect x="485.500" y="771.500" width="79" height="15" fill="#f0ee3c" stroke="#d8d640"/><text x="487" y="782.500" class="t11" fill="#333">lun 23-set-2019</text>';
 s+='<path d="M4 787.500H1053" stroke="#aaa"/>';
 document.getElementById('s6').innerHTML=s;
})();
</script>
<script src="https://cdn.jsdelivr.net/npm/bootstrap@5.3.0/dist/js/bootstrap.bundle.min.js"></script>
</body>
</html>
